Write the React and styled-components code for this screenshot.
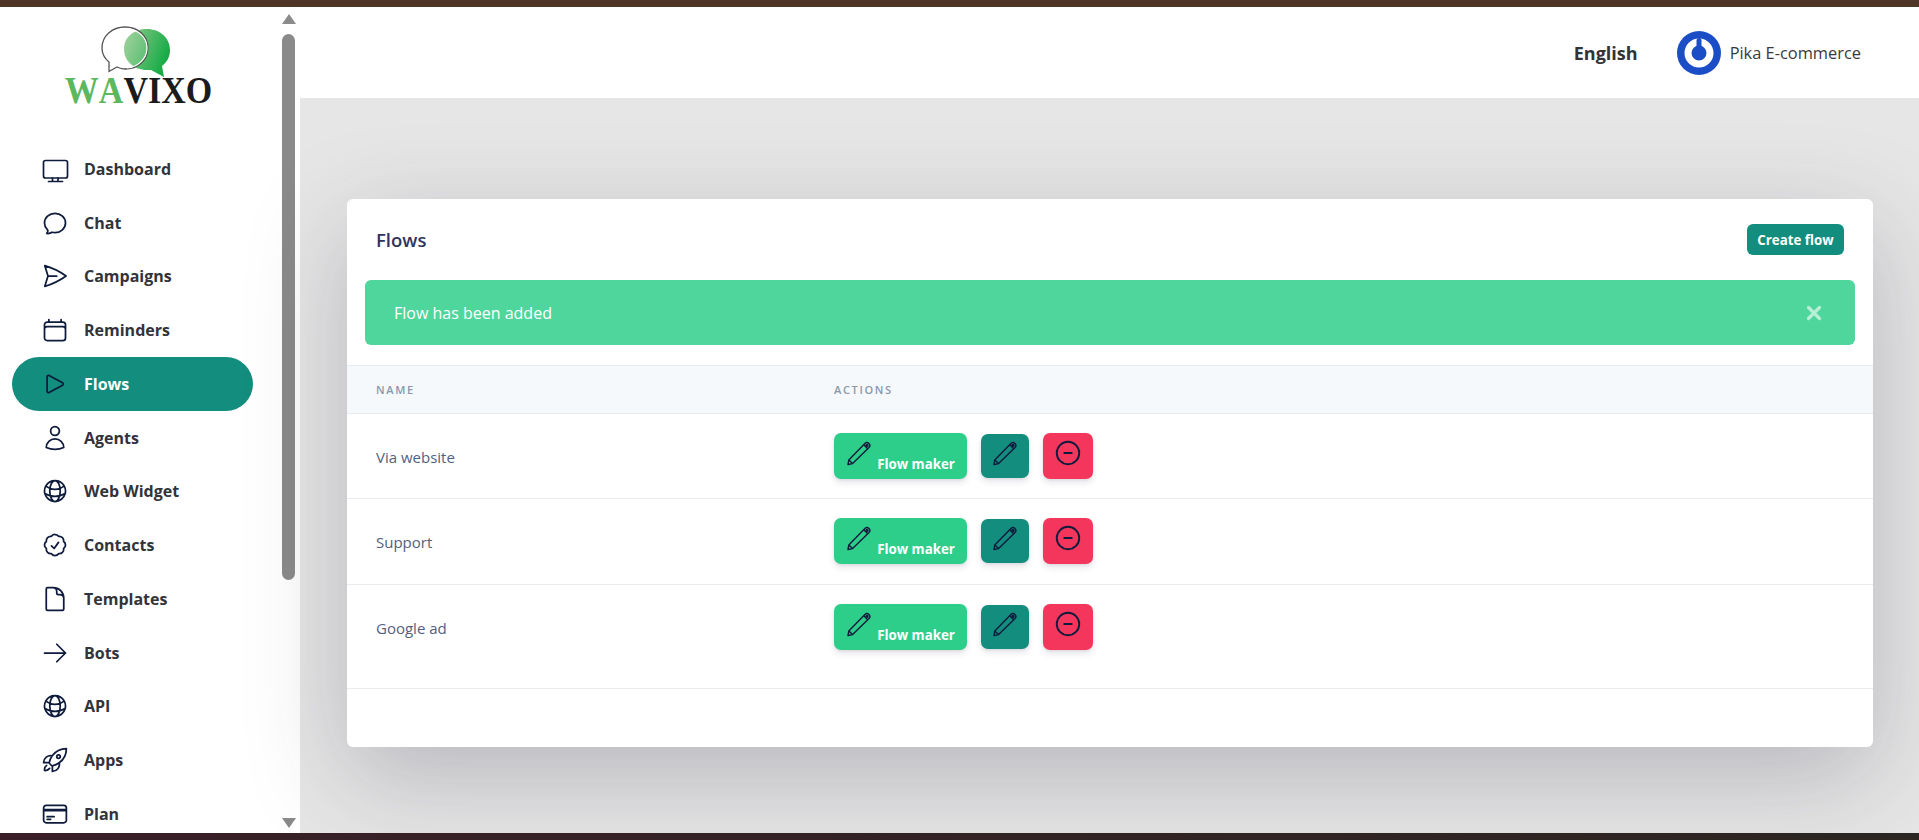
import React from 'react';
import styled, { createGlobalStyle } from 'styled-components';
import {
  HiOutlineChatBubbleOvalLeft,
  HiOutlinePaperAirplane,
  HiOutlineCalendar,
  HiOutlinePlay,
  HiOutlineUser,
  HiOutlineGlobeAlt,
  HiOutlineCheckBadge,
  HiOutlineDocument,
  HiOutlineArrowRight,
  HiOutlineRocketLaunch,
  HiOutlineCreditCard,
  HiOutlineMinusCircle,
  HiOutlineXMark,
} from 'react-icons/hi2';

const GlobalStyle = createGlobalStyle`
  html, body {
    margin: 0;
    padding: 0;
    height: 100%;
    font-family: "Open Sans", "Liberation Sans", sans-serif;
  }
  * { box-sizing: border-box; }
`;

const Page = styled.div`
  height: 100vh;
  display: flex;
  flex-direction: column;
  overflow: hidden;
`;

const TopStrip = styled.div`
  height: 7px;
  flex: none;
  background: #4f3526;
  z-index: 3;
`;

const BottomStrip = styled.div`
  height: 7px;
  flex: none;
  background: linear-gradient(to right, #3a1f28, #2b2622);
  z-index: 3;
`;

const Body = styled.div`
  flex: 1;
  display: flex;
  min-height: 0;
`;

const Sidebar = styled.aside`
  width: 300px;
  flex: none;
  display: flex;
  background: #fff;
`;

const SideColumn = styled.div`
  width: 282px;
  flex: none;
`;

const LogoBox = styled.div`
  height: 135px;
  display: flex;
  flex-direction: column;
  align-items: center;
  padding-top: 19px;
  padding-right: 5px;
`;

const LogoMark = styled.svg`
  margin-right: 6px;
`;

const LogoText = styled.div`
  font-family: "Liberation Serif", serif;
  font-weight: 700;
  font-size: 34px;
  line-height: 28px;
  font-kerning: none;
  color: #1b1b1b;
  margin-top: -1px;
  transform: scaleY(1.1);
  span { color: #5cb85f; }
`;

const Nav = styled.nav`
  display: flex;
  flex-direction: column;
  margin-left: 12px;
  width: 241px;
`;

const NavRow = styled.a`
  height: 53.75px;
  display: flex;
  align-items: center;
  gap: 15px;
  padding-left: 29px;
  border-radius: 27px;
  font-size: 16px;
  font-weight: 700;
  color: ${({ $active }) => ($active ? '#fff' : '#32333b')};
  background: ${({ $active }) => ($active ? '#138d7d' : 'transparent')};
  svg {
    width: 28px;
    height: 28px;
    color: #0f1b3d;
    flex: none;
  }
`;

const ScrollRail = styled.div`
  width: 13px;
  flex: none;
  display: flex;
  flex-direction: column;
  align-items: center;
`;

const RailArrow = styled.div`
  width: 0;
  height: 0;
  flex: none;
  border-left: 7px solid transparent;
  border-right: 7px solid transparent;
  ${({ $down }) => ($down ? 'border-top: 10px solid #8a8a8a;' : 'border-bottom: 10px solid #8a8a8a;')}
  margin: ${({ $down }) => ($down ? 'auto 0 5px' : '7px 0 0')};
`;

const RailThumb = styled.div`
  width: 13px;
  height: 546px;
  margin-top: 10px;
  border-radius: 7px;
  background: #8a8a8a;
  flex: none;
`;

const Main = styled.main`
  flex: 1;
  min-width: 0;
  display: flex;
  flex-direction: column;
`;

const Header = styled.header`
  height: 91px;
  flex: none;
  background: #fff;
  display: flex;
  align-items: center;
  justify-content: flex-end;
  padding-right: 58px;
  z-index: 2;
`;

const Language = styled.div`
  font-size: 18px;
  font-weight: 700;
  color: #333;
  margin-right: 39px;
`;

const Avatar = styled.svg`
  width: 44px;
  height: 44px;
  margin-right: 9px;
`;

const Company = styled.div`
  font-size: 16.4px;
  color: #3a3a3a;
`;

const Content = styled.div`
  flex: 1;
  background: #e6e6e6;
  padding: 101px 46px 0 47px;
`;

const Card = styled.section`
  position: relative;
  z-index: 1;
  height: 548px;
  background: #fff;
  border-radius: 6px;
  box-shadow: 0 30px 100px rgba(50, 45, 70, 0.26);
`;

const CardHead = styled.div`
  height: 81px;
  display: flex;
  align-items: center;
  justify-content: space-between;
  padding: 0 29px;
`;

const Title = styled.h3`
  margin: 0;
  font-size: 18.5px;
  font-weight: 600;
  color: #32325d;
`;

const CreateButton = styled.button`
  height: 31px;
  width: 97px;
  padding: 0;
  border: 0;
  border-radius: 6px;
  background: #138d7d;
  color: #fff;
  font-family: inherit;
  font-size: 13.3px;
  font-weight: 700;
`;

const Alert = styled.div`
  height: 65px;
  margin: 0 18px 20px;
  padding: 0 29px;
  display: flex;
  align-items: center;
  justify-content: space-between;
  background: #4fd69c;
  border-radius: 6px;
  color: #fff;
  font-size: 16px;
  svg {
    width: 22px;
    height: 22px;
    margin-right: 1px;
    color: rgba(255, 255, 255, 0.6);
    stroke-width: 3.5;
  }
`;

const Table = styled.table`
  width: 100%;
  border-collapse: collapse;
  table-layout: fixed;
`;

const Th = styled.th`
  height: 48px;
  padding: 0 0 0 29px;
  text-align: left;
  font-size: 11px;
  font-weight: 600;
  letter-spacing: 1.65px;
  color: #8898aa;
  background: #f6f9fc;
  border-top: 1px solid #e9ecef;
  border-bottom: 1px solid #e9ecef;
  width: ${({ $w }) => $w || 'auto'};
`;

const Tr = styled.tr`
  border-bottom: 1px solid #e9ecef;
  &:last-child td { padding-bottom: 38px; }
`;

const Td = styled.td`
  padding: 19px 0 19.3px 29px;
  vertical-align: top;
  font-size: 15px;
  line-height: 46px;
  color: #525f7f;
`;

const NameText = styled.span`
  display: block;
  padding-top: 1px;
  height: 46px;
`;

const Actions = styled.div`
  display: flex;
  align-items: center;
  gap: 14px;
  svg {
    color: #0f1b3d;
    flex: none;
    margin-bottom: 6px;
  }
`;

const ActionButton = styled.button`
  display: flex;
  align-items: center;
  justify-content: center;
  height: ${({ $h }) => $h}px;
  width: ${({ $w }) => $w}px;
  padding: 0;
  border: 0;
  border-radius: 7px;
  background: ${({ $bg }) => $bg};
  box-shadow: 0 4px 6px rgba(50, 50, 93, 0.11), 0 1px 3px rgba(0, 0, 0, 0.08);
  color: #fff;
  font-family: inherit;
  font-size: 13.3px;
  font-weight: 700;
`;

const MakerLabel = styled.span`
  margin: 16px 0 0 5px;
  line-height: 18px;
`;

const MinusIcon = styled(HiOutlineMinusCircle)`
  width: 30px;
  height: 30px;
`;

const DesktopIcon = () => (
  <svg viewBox="0 0 28 28" fill="none" stroke="currentColor" strokeWidth="1.7" strokeLinecap="round">
    <rect x="2.500" y="5.500" width="24" height="17.500" rx="2" />
    <path d="M11.500 23v3.500M17 23v3.500M7.500 26.500h14" />
  </svg>
);

const PencilIcon = () => (
  <svg width="26" height="26" viewBox="0 0 26 26" fill="none" stroke="currentColor" strokeWidth="1.4" strokeLinejoin="round">
    <path d="M2 24.500l.8-4.600L18.900 3.400a2.900 2.900 0 0 1 4.100 4.100L6.600 23.600z" />
    <path d="M2.800 19.900l3.800 3.700M17.800 4.700l3.900 4" />
    <circle cx="21" cy="5.400" r="0.900" />
  </svg>
);

const menu = [
  ['Dashboard', DesktopIcon],
  ['Chat', HiOutlineChatBubbleOvalLeft],
  ['Campaigns', HiOutlinePaperAirplane],
  ['Reminders', HiOutlineCalendar],
  ['Flows', HiOutlinePlay],
  ['Agents', HiOutlineUser],
  ['Web Widget', HiOutlineGlobeAlt],
  ['Contacts', HiOutlineCheckBadge],
  ['Templates', HiOutlineDocument],
  ['Bots', HiOutlineArrowRight],
  ['API', HiOutlineGlobeAlt],
  ['Apps', HiOutlineRocketLaunch],
  ['Plan', HiOutlineCreditCard],
];

const flows = ['Via website', 'Support', 'Google ad'];

const BubbleLogo = () => (
  <LogoMark width="72" height="52" viewBox="0 0 72 52">
    <defs>
      <linearGradient id="bubbleGreen" x1="0" y1="0.3" x2="1" y2="0.7">
        <stop offset="0" stopColor="#8cc98a" />
        <stop offset="1" stopColor="#0aa83f" />
      </linearGradient>
    </defs>
    <path
      d="M47 3c13 0 23 9 23 21 0 7-3 12-8 16l2 11-13-7c-1 0-3 0-4 0-13 0-23-9-23-21S34 3 47 3z"
      fill="url(#bubbleGreen)"
    />
    <path
      d="M25 1c13 0 23 9 23 21s-10 21-23 21c-3 0-6-1-8-2L9 45.500V36C4 32 2 27 2 22 2 10 12 1 25 1z"
      fill="rgba(255,255,255,0.12)"
      stroke="#555"
      strokeWidth="1.3"
    />
    <path d="M27 2.500c11 1 20 9 20 19.500s-9 19-20 20" fill="none" stroke="#fff" strokeWidth="1.200" />
  </LogoMark>
);

const PikaLogo = () => (
  <Avatar viewBox="0 0 44 44">
    <circle cx="22" cy="22" r="22" fill="#1b4ec6" />
    <circle cx="22" cy="22" r="11" fill="none" stroke="#fff" strokeWidth="7" />
    <rect x="19.500" y="7" width="5" height="17" rx="2.500" fill="#1b4ec6" />
  </Avatar>
);

export default function App() {
  return (
    <Page>
      <GlobalStyle />
      <TopStrip />
      <Body>
        <Sidebar>
          <SideColumn>
            <LogoBox>
              <BubbleLogo />
              <LogoText><span>WA</span>VIXO</LogoText>
            </LogoBox>
            <Nav>
              {menu.map(([label, Icon]) => (
                <NavRow key={label} $active={label === 'Flows'}>
                  <Icon />
                  {label}
                </NavRow>
              ))}
            </Nav>
          </SideColumn>
          <ScrollRail>
            <RailArrow />
            <RailThumb />
            <RailArrow $down />
          </ScrollRail>
        </Sidebar>
        <Main>
          <Header>
            <Language>English</Language>
            <PikaLogo />
            <Company>Pika E-commerce</Company>
          </Header>
          <Content>
            <Card>
              <CardHead>
                <Title>Flows</Title>
                <CreateButton>Create flow</CreateButton>
              </CardHead>
              <Alert>
                Flow has been added
                <HiOutlineXMark />
              </Alert>
              <Table>
                <thead>
                  <tr>
                    <Th $w="458px">NAME</Th>
                    <Th>ACTIONS</Th>
                  </tr>
                </thead>
                <tbody>
                  {flows.map((name) => (
                    <Tr key={name}>
                      <Td><NameText>{name}</NameText></Td>
                      <Td>
                        <Actions>
                          <ActionButton $w={133} $h={46} $bg="#2dce89">
                            <PencilIcon />
                            <MakerLabel>Flow maker</MakerLabel>
                          </ActionButton>
                          <ActionButton $w={48} $h={44} $bg="#138d7d">
                            <PencilIcon />
                          </ActionButton>
                          <ActionButton $w={50} $h={46} $bg="#f5365c">
                            <MinusIcon />
                          </ActionButton>
                        </Actions>
                      </Td>
                    </Tr>
                  ))}
                </tbody>
              </Table>
            </Card>
          </Content>
        </Main>
      </Body>
      <BottomStrip />
    </Page>
  );
}
